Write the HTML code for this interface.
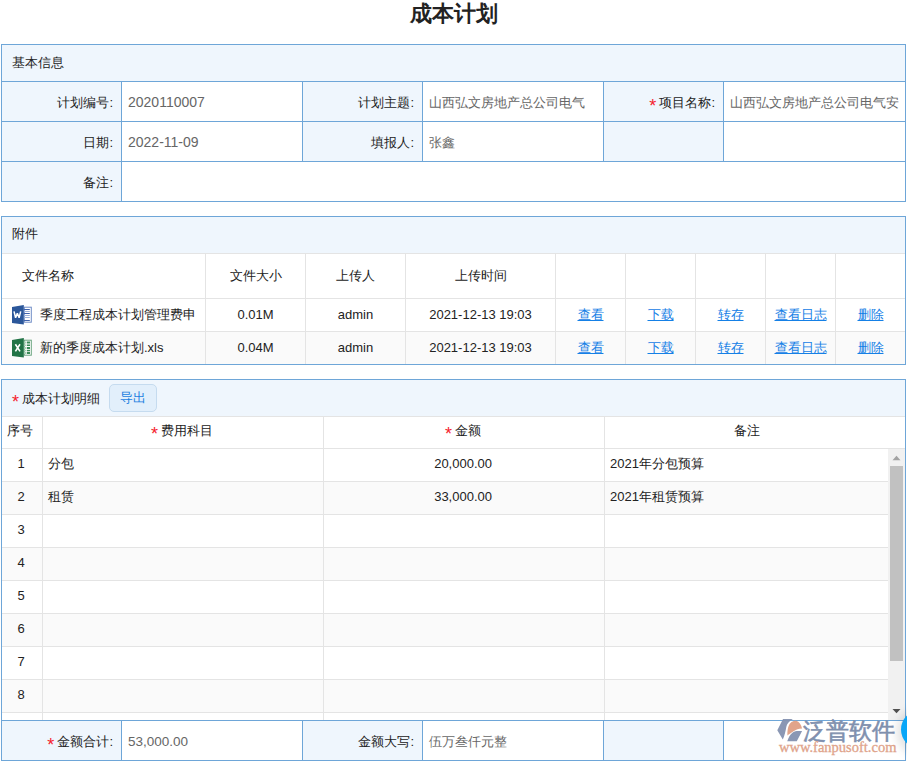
<!DOCTYPE html>
<html><head><meta charset="utf-8">
<style>
*{box-sizing:border-box;margin:0;padding:0}
html,body{width:907px;height:763px;overflow:hidden;background:#fff}
body{position:relative;font-family:"Liberation Sans",sans-serif;font-size:13px;color:#333}
.a{position:absolute}
.title{position:absolute;left:0;width:907px;top:0;height:28px;line-height:27px;text-align:center;font-size:22px;font-weight:bold;color:#222}
.t{position:absolute;white-space:nowrap;line-height:16px;color:#222}
.lab{text-align:right}
.val{color:#666}
.n14{font-size:14px;position:relative;top:-1px}
.n135{font-size:13.5px}
.st{color:#f5222d;font-size:18px;position:relative;top:5px;margin-right:3px;line-height:10px}
.lnk{position:absolute;color:#1580e6;text-decoration:underline;white-space:nowrap;line-height:16px;text-align:center}
</style></head><body>
<div class="title">成本计划</div>
<div class="a" style="left:1px;top:44px;width:905px;height:158px;background:#eff6fd"></div>
<div class="a" style="left:122px;top:82px;width:180px;height:39px;background:#fff"></div>
<div class="a" style="left:423px;top:82px;width:180px;height:79px;background:#fff"></div>
<div class="a" style="left:724px;top:82px;width:181px;height:39px;background:#fff"></div>
<div class="a" style="left:724px;top:122px;width:181px;height:39px;background:#fff"></div>
<div class="a" style="left:122px;top:122px;width:180px;height:39px;background:#fff"></div>
<div class="a" style="left:122px;top:162px;width:783px;height:39px;background:#fff"></div>
<div class="a" style="left:1px;top:44px;width:905px;height:1px;background:#6ea6d8"></div>
<div class="a" style="left:1px;top:81px;width:905px;height:1px;background:#6ea6d8"></div>
<div class="a" style="left:1px;top:121px;width:905px;height:1px;background:#6ea6d8"></div>
<div class="a" style="left:1px;top:161px;width:905px;height:1px;background:#6ea6d8"></div>
<div class="a" style="left:1px;top:201px;width:905px;height:1px;background:#6ea6d8"></div>
<div class="a" style="left:1px;top:44px;width:1px;height:158px;background:#6ea6d8"></div>
<div class="a" style="left:905px;top:44px;width:1px;height:158px;background:#6ea6d8"></div>
<div class="a" style="left:121px;top:81px;width:1px;height:121px;background:#6ea6d8"></div>
<div class="a" style="left:302px;top:81px;width:1px;height:81px;background:#6ea6d8"></div>
<div class="a" style="left:422px;top:81px;width:1px;height:81px;background:#6ea6d8"></div>
<div class="a" style="left:603px;top:81px;width:1px;height:81px;background:#6ea6d8"></div>
<div class="a" style="left:723px;top:81px;width:1px;height:81px;background:#6ea6d8"></div>
<div class="t" style="left:12px;top:55px;">基本信息</div>
<div class="t lab" style="left:0px;top:95px;width:113px;">计划编号:</div>
<div class="t val" style="left:128px;top:95px;"><span class="n14">2020110007</span></div>
<div class="t lab" style="left:302px;top:95px;width:112px;">计划主题:</div>
<div class="t val" style="left:429px;top:95px;">山西弘文房地产总公司电气</div>
<div class="t lab" style="left:603px;top:95px;width:112px;"><span class="st">*</span>项目名称:</div>
<div class="t val" style="left:730px;top:95px;width:175px;overflow:hidden">山西弘文房地产总公司电气安</div>
<div class="t lab" style="left:0px;top:135px;width:113px;">日期:</div>
<div class="t val" style="left:128px;top:135px;"><span class="n14">2022-11-09</span></div>
<div class="t lab" style="left:302px;top:135px;width:112px;">填报人:</div>
<div class="t val" style="left:429px;top:135px;">张鑫</div>
<div class="t lab" style="left:0px;top:175px;width:113px;">备注:</div>
<div class="a" style="left:1px;top:216px;width:905px;height:38px;background:#eff6fd"></div>
<div class="a" style="left:2px;top:332px;width:903px;height:32px;background:#fafafa"></div>
<div class="a" style="left:1px;top:216px;width:905px;height:1px;background:#6ea6d8"></div>
<div class="a" style="left:2px;top:253px;width:903px;height:1px;background:#e4e4e4"></div>
<div class="a" style="left:2px;top:298px;width:903px;height:1px;background:#e4e4e4"></div>
<div class="a" style="left:2px;top:331px;width:903px;height:1px;background:#e4e4e4"></div>
<div class="a" style="left:1px;top:364px;width:905px;height:1px;background:#6ea6d8"></div>
<div class="a" style="left:1px;top:216px;width:1px;height:149px;background:#6ea6d8"></div>
<div class="a" style="left:905px;top:216px;width:1px;height:149px;background:#6ea6d8"></div>
<div class="a" style="left:205px;top:254px;width:1px;height:110px;background:#e4e4e4"></div>
<div class="a" style="left:305px;top:254px;width:1px;height:110px;background:#e4e4e4"></div>
<div class="a" style="left:405px;top:254px;width:1px;height:110px;background:#e4e4e4"></div>
<div class="a" style="left:555px;top:254px;width:1px;height:110px;background:#e4e4e4"></div>
<div class="a" style="left:625px;top:254px;width:1px;height:110px;background:#e4e4e4"></div>
<div class="a" style="left:695px;top:254px;width:1px;height:110px;background:#e4e4e4"></div>
<div class="a" style="left:765px;top:254px;width:1px;height:110px;background:#e4e4e4"></div>
<div class="a" style="left:835px;top:254px;width:1px;height:110px;background:#e4e4e4"></div>
<div class="t" style="left:12px;top:226px;">附件</div>
<div class="t" style="left:22px;top:268px;">文件名称</div>
<div class="t" style="left:206px;top:268px;width:99px;text-align:center;">文件大小</div>
<div class="t" style="left:306px;top:268px;width:99px;text-align:center;">上传人</div>
<div class="t" style="left:406px;top:268px;width:149px;text-align:center;">上传时间</div>
<svg class="a" style="left:12px;top:305px" width="21" height="21" viewBox="0 0 21 21">
<rect x="12.3" y="2.2" width="7" height="15" fill="#fff" stroke="#6f8cc6" stroke-width="1"/>
<rect x="11.8" y="4" width="6" height="1" fill="#3f63ad"/>
<rect x="11.8" y="6" width="6" height="1" fill="#9db2da"/>
<rect x="11.8" y="8" width="6" height="1" fill="#3f63ad"/>
<rect x="11.8" y="10" width="6" height="1" fill="#9db2da"/>
<rect x="11.8" y="12" width="6" height="1" fill="#9db2da"/>
<rect x="11.8" y="15" width="6" height="1" fill="#3f63ad"/>
<path d="M0 1.9 L11.8 0.1 L11.8 19.6 L0 17.9 Z" fill="#2b579a"/>
<path d="M2 6.4 L3.6 12.8 L5.35 8.2 L7.1 12.8 L8.7 6.4" fill="none" stroke="#fff" stroke-width="1.5" stroke-linejoin="bevel"/>
</svg>
<div class="t" style="left:40px;top:307px;">季度工程成本计划管理费申</div>
<div class="t" style="left:206px;top:307px;width:99px;text-align:center;">0.01M</div>
<div class="t" style="left:306px;top:307px;width:99px;text-align:center;">admin</div>
<div class="t" style="left:406px;top:307px;width:149px;text-align:center;">2021-12-13 19:03</div>
<div class="lnk" style="left:556px;top:307px;width:69px;">查看</div>
<div class="lnk" style="left:626px;top:307px;width:69px;">下载</div>
<div class="lnk" style="left:696px;top:307px;width:69px;">转存</div>
<div class="lnk" style="left:766px;top:307px;width:69px;">查看日志</div>
<div class="lnk" style="left:836px;top:307px;width:69px;">删除</div>
<svg class="a" style="left:12px;top:338px" width="21" height="21" viewBox="0 0 21 21">
<rect x="12.3" y="2.2" width="7" height="15" fill="#fff" stroke="#6aa47f" stroke-width="1"/>
<g fill="#3b8a58"><rect x="15" y="3.5" width="3" height="2"/><rect x="15" y="6.5" width="3" height="1.5"/><rect x="15" y="9" width="3" height="2"/><rect x="15" y="11.8" width="3" height="1.5"/><rect x="15" y="14" width="3" height="2"/></g>
<g fill="#a9cfb6"><rect x="12" y="3.5" width="2.5" height="2"/><rect x="12" y="6.5" width="2.5" height="1.5"/><rect x="12" y="9" width="2.5" height="2"/><rect x="12" y="11.8" width="2.5" height="1.5"/><rect x="12" y="14" width="2.5" height="2"/></g>
<path d="M0 1.9 L11.8 0.1 L11.8 19.6 L0 17.9 Z" fill="#217346"/>
<path d="M3.4 6.2 L8 13.4 M8 6.2 L3.4 13.4" fill="none" stroke="#fff" stroke-width="1.6"/>
</svg>
<div class="t" style="left:40px;top:340px;">新的季度成本计划.xls</div>
<div class="t" style="left:206px;top:340px;width:99px;text-align:center;">0.04M</div>
<div class="t" style="left:306px;top:340px;width:99px;text-align:center;">admin</div>
<div class="t" style="left:406px;top:340px;width:149px;text-align:center;">2021-12-13 19:03</div>
<div class="lnk" style="left:556px;top:340px;width:69px;">查看</div>
<div class="lnk" style="left:626px;top:340px;width:69px;">下载</div>
<div class="lnk" style="left:696px;top:340px;width:69px;">转存</div>
<div class="lnk" style="left:766px;top:340px;width:69px;">查看日志</div>
<div class="lnk" style="left:836px;top:340px;width:69px;">删除</div>
<div class="a" style="left:1px;top:379px;width:905px;height:38px;background:#eff6fd"></div>
<div class="a" style="left:2px;top:482px;width:886px;height:32px;background:#fafafa"></div>
<div class="a" style="left:2px;top:548px;width:886px;height:32px;background:#fafafa"></div>
<div class="a" style="left:2px;top:614px;width:886px;height:32px;background:#fafafa"></div>
<div class="a" style="left:2px;top:680px;width:886px;height:32px;background:#fafafa"></div>
<div class="a" style="left:2px;top:713px;width:886px;height:7px;background:#fff"></div>
<div class="a" style="left:1px;top:379px;width:905px;height:1px;background:#6ea6d8"></div>
<div class="a" style="left:2px;top:416px;width:903px;height:1px;background:#e4e4e4"></div>
<div class="a" style="left:2px;top:448px;width:903px;height:1px;background:#e4e4e4"></div>
<div class="a" style="left:2px;top:481px;width:886px;height:1px;background:#e4e4e4"></div>
<div class="a" style="left:2px;top:514px;width:886px;height:1px;background:#e4e4e4"></div>
<div class="a" style="left:2px;top:547px;width:886px;height:1px;background:#e4e4e4"></div>
<div class="a" style="left:2px;top:580px;width:886px;height:1px;background:#e4e4e4"></div>
<div class="a" style="left:2px;top:613px;width:886px;height:1px;background:#e4e4e4"></div>
<div class="a" style="left:2px;top:646px;width:886px;height:1px;background:#e4e4e4"></div>
<div class="a" style="left:2px;top:679px;width:886px;height:1px;background:#e4e4e4"></div>
<div class="a" style="left:2px;top:712px;width:886px;height:1px;background:#e4e4e4"></div>
<div class="a" style="left:42px;top:417px;width:1px;height:303px;background:#e4e4e4"></div>
<div class="a" style="left:323px;top:417px;width:1px;height:303px;background:#e4e4e4"></div>
<div class="a" style="left:604px;top:417px;width:1px;height:303px;background:#e4e4e4"></div>
<div class="a" style="left:1px;top:379px;width:1px;height:382px;background:#6ea6d8"></div>
<div class="a" style="left:905px;top:379px;width:1px;height:382px;background:#6ea6d8"></div>
<div class="t" style="left:12px;top:391px;"><span class="st">*</span>成本计划明细</div>
<div class="a" style="left:109px;top:384px;width:48px;height:28px;border:1px solid #c5dbef;border-radius:5px;background:#e2effb;color:#1b7ee0;text-align:center;line-height:25px">导出</div>
<div class="t" style="left:7px;top:423px;">序号</div>
<div class="t" style="left:42px;top:423px;width:280px;text-align:center;"><span class="st">*</span>费用科目</div>
<div class="t" style="left:323px;top:423px;width:280px;text-align:center;"><span class="st">*</span>金额</div>
<div class="t" style="left:605px;top:423px;width:283px;text-align:center;">备注</div>
<div class="t" style="left:1px;top:456px;width:40px;text-align:center;">1</div>
<div class="t" style="left:1px;top:489px;width:40px;text-align:center;">2</div>
<div class="t" style="left:1px;top:522px;width:40px;text-align:center;">3</div>
<div class="t" style="left:1px;top:555px;width:40px;text-align:center;">4</div>
<div class="t" style="left:1px;top:588px;width:40px;text-align:center;">5</div>
<div class="t" style="left:1px;top:621px;width:40px;text-align:center;">6</div>
<div class="t" style="left:1px;top:654px;width:40px;text-align:center;">7</div>
<div class="t" style="left:1px;top:687px;width:40px;text-align:center;">8</div>
<div class="t" style="left:48px;top:456px;">分包</div>
<div class="t" style="left:324px;top:456px;width:168px;text-align:right;">20,000.00</div>
<div class="t" style="left:610px;top:456px;">2021年分包预算</div>
<div class="t" style="left:48px;top:489px;">租赁</div>
<div class="t" style="left:324px;top:489px;width:168px;text-align:right;">33,000.00</div>
<div class="t" style="left:610px;top:489px;">2021年租赁预算</div>
<div class="a" style="left:888px;top:449px;width:17px;height:271px;background:#f1f1f1"></div>
<div class="a" style="left:890px;top:466px;width:13px;height:195px;background:#c1c1c1"></div>
<svg class="a" style="left:888px;top:449px" width="17" height="17"><path d="M4.5 11.2 L8.5 6.8 L12.5 11.2 Z" fill="#a3a3a3"/></svg>
<svg class="a" style="left:888px;top:703px" width="17" height="17"><path d="M4.5 6 L8.5 10.2 L12.5 6 Z" fill="#505050"/></svg>
<div class="a" style="left:1px;top:720px;width:905px;height:41px;background:#eff6fd"></div>
<div class="a" style="left:122px;top:721px;width:180px;height:39px;background:#fff"></div>
<div class="a" style="left:423px;top:721px;width:180px;height:39px;background:#fff"></div>
<div class="a" style="left:724px;top:721px;width:181px;height:39px;background:#fff"></div>
<div class="a" style="left:1px;top:720px;width:905px;height:1px;background:#6ea6d8"></div>
<div class="a" style="left:1px;top:760px;width:905px;height:1px;background:#6ea6d8"></div>
<div class="a" style="left:1px;top:720px;width:1px;height:41px;background:#6ea6d8"></div>
<div class="a" style="left:121px;top:720px;width:1px;height:41px;background:#6ea6d8"></div>
<div class="a" style="left:302px;top:720px;width:1px;height:41px;background:#6ea6d8"></div>
<div class="a" style="left:422px;top:720px;width:1px;height:41px;background:#6ea6d8"></div>
<div class="a" style="left:603px;top:720px;width:1px;height:41px;background:#6ea6d8"></div>
<div class="a" style="left:723px;top:720px;width:1px;height:41px;background:#6ea6d8"></div>
<div class="a" style="left:905px;top:720px;width:1px;height:41px;background:#6ea6d8"></div>
<div class="t lab" style="left:0px;top:734px;width:113px;"><span class="st">*</span>金额合计:</div>
<div class="t val" style="left:128px;top:734px;"><span class="n135">53,000.00</span></div>
<div class="t lab" style="left:302px;top:734px;width:112px;">金额大写:</div>
<div class="t val" style="left:429px;top:734px;">伍万叁仟元整</div>
<svg class="a" style="left:770px;top:712px" width="137" height="51" viewBox="770 712 137 51">
<g opacity="0.95">
<path d="M783 719.1 L792.9 719.1 C789 721.5 786.8 724 786.3 727 C785.6 731 784.5 736 782.8 739.6 L777.3 730.3 Z" fill="#8492b0"/>
<path d="M787.4 735.4 C787.3 729 788.5 724 791.5 722 C793 721 795 720.6 796.4 720.7 C799 721.5 801.2 724.5 802.1 728.4 C798.5 728.6 796 729.5 794.4 730.7 C791.5 732.5 789.5 733.8 787.4 735.4 Z" fill="#e0a084"/>
<path d="M787.2 741.3 C788.5 737.5 790 735 791.7 733.5 C793 732 795 731.2 796.8 731.1 L802.1 730.9 L796.8 741.3 Z" fill="#8492b0"/>
</g>
</svg>
<div class="a" style="left:803px;top:717px;font-size:23px;line-height:28px;color:#8090ae;white-space:nowrap;-webkit-text-stroke:0.6px #8090ae">泛普软件</div>
<div class="a" style="left:779px;top:740px;font-family:'Liberation Serif',serif;font-size:14.5px;line-height:14px;color:#e0a38a;white-space:nowrap;-webkit-text-stroke:0.3px #e0a38a">www.fanpusoft.com</div>
<div class="a" style="left:896px;top:708px;width:48px;height:48px;border-radius:50%;background:rgba(0,0,0,0.10);filter:blur(4px)"></div>
<div class="a" style="left:901px;top:710px;width:39px;height:39px;border-radius:50%;background:#08a6f8"></div>
</body></html>
